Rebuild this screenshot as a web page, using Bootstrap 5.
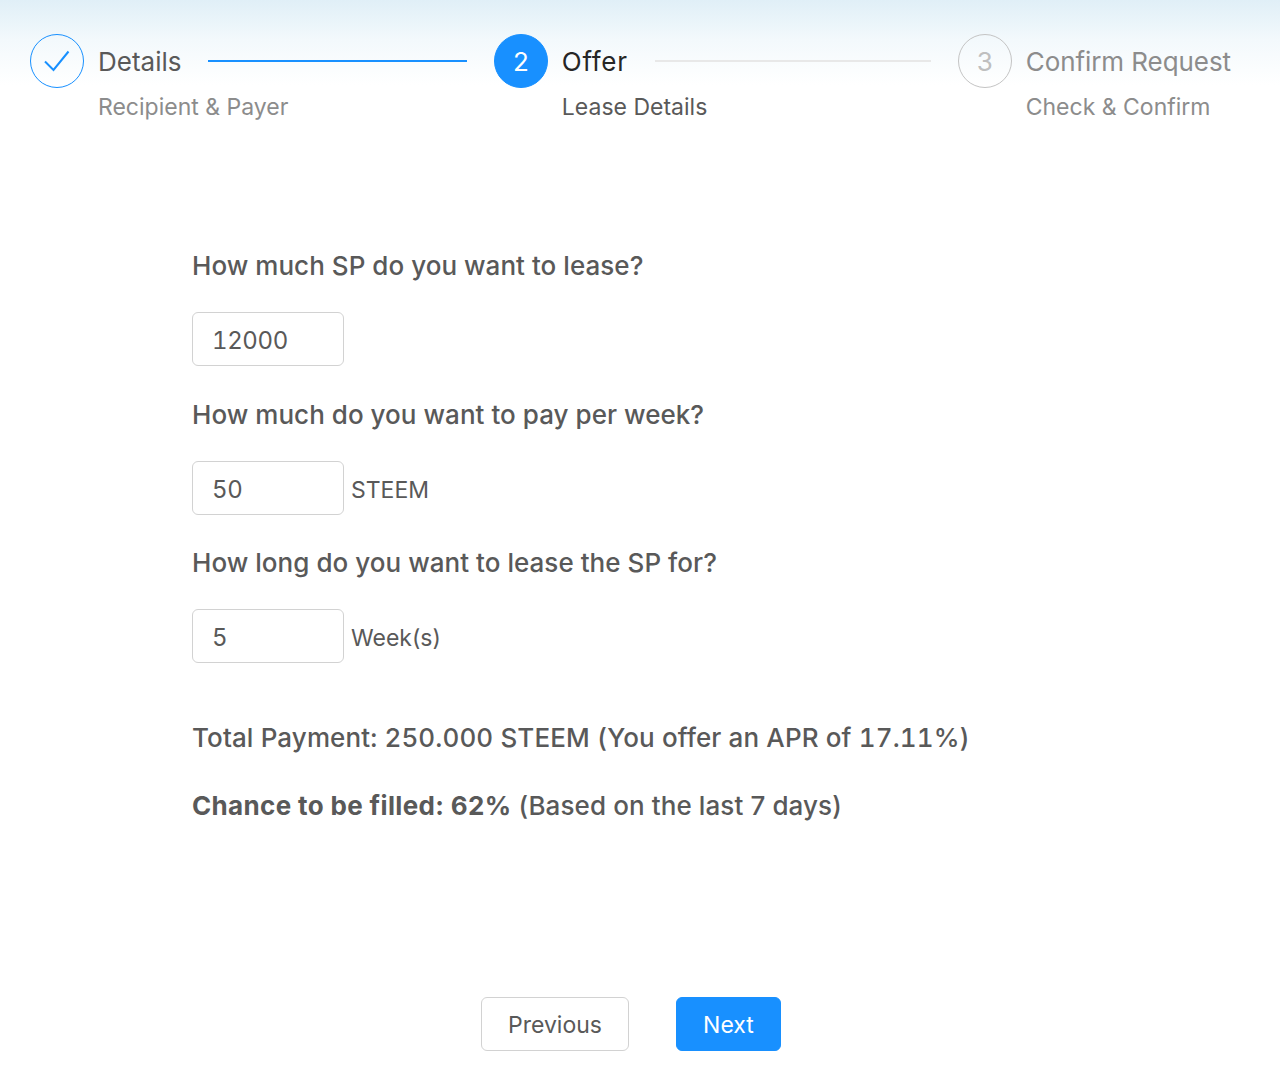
<!DOCTYPE html>
<html lang="en">
<head>
    <meta charset="UTF-8">
    <title>Lease Offer</title>
    <meta name="viewport" content="width=device-width, initial-scale=1">
    <link href="https://cdn.jsdelivr.net/npm/bootstrap@5.3.0/dist/css/bootstrap.min.css" rel="stylesheet">
    <style>
        body {
            background: #fff;
            color: #595959;
            font-family: Inter, "Liberation Sans", sans-serif;
            height: 1083px;
            overflow: hidden;
        }
        .top-fade {
            background: linear-gradient(to bottom, #e0eff7 0, #f3f9fc 40px, #fff 85px);
            height: 140px;
            padding: 34px 49px 0 30px;
        }
        .step-item { flex: 1 1 0; }
        .step-item.step-last { flex: 0 0 auto; }
        .step-circle {
            width: 54px;
            height: 54px;
            border-radius: 50%;
            border: 1.5px solid #1890ff;
            color: #1890ff;
            font-size: 26px;
            flex: none;
        }
        .step-circle.now { background: #1890ff; color: #fff; }
        .step-circle.todo { border-color: #c4c4c4; color: #bfbfbf; }
        .step-body { margin-left: 14px; flex: 1; min-width: 0; }
        .step-head { height: 54px; }
        .step-title { font-size: 26px; white-space: nowrap; color: #595959; }
        .step-title.now { color: #262626; letter-spacing: .7px; }
        .step-title.todo { color: #8c8c8c; letter-spacing: -.07px; }
        .step-line { flex: 1; height: 2px; margin: 0 27px; background: #1890ff; }
        .step-line.todo { background: #e8e8e8; }
        .step-sub { font-size: 23px; line-height: 38px; white-space: nowrap; color: #8c8c8c; }
        .step-sub.now { color: #595959; }
        .lease-form { padding: 106px 0 0 192px; }
        .ask {
            font-size: 26px;
            line-height: 40px;
            font-weight: 500;
            letter-spacing: .04px;
            height: 66px;
            margin: 0;
        }
        .ask-row { height: 82.5px; align-items: flex-start; gap: 7px; font-size: 23px; line-height: 58px; }
        .ask-input.form-control {
            width: 152px;
            height: 54px;
            flex: none;
            padding: 3px 19px 0;
            font-size: 24px;
            letter-spacing: -.4px;
            font-variant-numeric: tabular-nums;
            color: #595959;
            border: 1.5px solid #d2d2d2;
            border-radius: 6px;
            font-family: inherit;
        }
        .sum-line {
            font-size: 26px;
            line-height: 40px;
            font-weight: 500;
            letter-spacing: .1px;
            margin: 0 0 28px;
        }
        .sum-first { margin-top: 26px; letter-spacing: .12px; font-variant-numeric: tabular-nums; }
        .sum-line b { font-weight: 700; letter-spacing: .35px; }
        .form-foot { position: absolute; top: 997px; left: 481px; gap: 47px; }
        .foot-btn.btn {
            height: 54px;
            font-size: 23px;
            border-radius: 6px;
            padding: 3px 0 0;
            border: 1.5px solid #d2d2d2;
            color: #595959;
            background: #fff;
            width: 148px;
        }
        .foot-btn.btn.go { width: 105px; background: #1890ff; border-color: #1890ff; color: #fff; }
    </style>
</head>
<body>

<div class="top-fade d-flex">
    <div class="step-item d-flex">
        <div class="step-circle d-flex align-items-center justify-content-center">
            <svg width="26" height="22" viewBox="0 0 26 22" fill="none" stroke="#1890ff" stroke-width="2"><path d="M1 11.5 L9.5 20 L24.5 1.5"/></svg>
        </div>
        <div class="step-body">
            <div class="step-head d-flex align-items-center">
                <span class="step-title">Details</span>
                <div class="step-line"></div>
            </div>
            <div class="step-sub">Recipient &amp; Payer</div>
        </div>
    </div>
    <div class="step-item d-flex">
        <div class="step-circle now d-flex align-items-center justify-content-center">2</div>
        <div class="step-body">
            <div class="step-head d-flex align-items-center">
                <span class="step-title now">Offer</span>
                <div class="step-line todo"></div>
            </div>
            <div class="step-sub now">Lease Details</div>
        </div>
    </div>
    <div class="step-item step-last d-flex">
        <div class="step-circle todo d-flex align-items-center justify-content-center">3</div>
        <div class="step-body">
            <div class="step-head d-flex align-items-center">
                <span class="step-title todo">Confirm Request</span>
            </div>
            <div class="step-sub">Check &amp; Confirm</div>
        </div>
    </div>
</div>

<form class="lease-form">
    <p class="ask">How much SP do you want to lease?</p>
    <div class="ask-row d-flex">
        <input type="text" class="form-control ask-input" value="12000">
    </div>
    <p class="ask">How much do you want to pay per week?</p>
    <div class="ask-row d-flex">
        <input type="text" class="form-control ask-input" value="50">
        <span>STEEM</span>
    </div>
    <p class="ask">How long do you want to lease the SP for?</p>
    <div class="ask-row d-flex">
        <input type="text" class="form-control ask-input" value="5">
        <span>Week(s)</span>
    </div>
    <p class="sum-line sum-first">Total Payment: 250.000 STEEM (You offer an APR of 17.11%)</p>
    <p class="sum-line"><b>Chance to be filled: 62%</b> (Based on the last 7 days)</p>
</form>

<div class="form-foot d-flex">
    <button type="button" class="btn foot-btn">Previous</button>
    <button type="button" class="btn foot-btn go">Next</button>
</div>

<script src="https://cdn.jsdelivr.net/npm/bootstrap@5.3.0/dist/js/bootstrap.bundle.min.js"></script>
</body>
</html>
